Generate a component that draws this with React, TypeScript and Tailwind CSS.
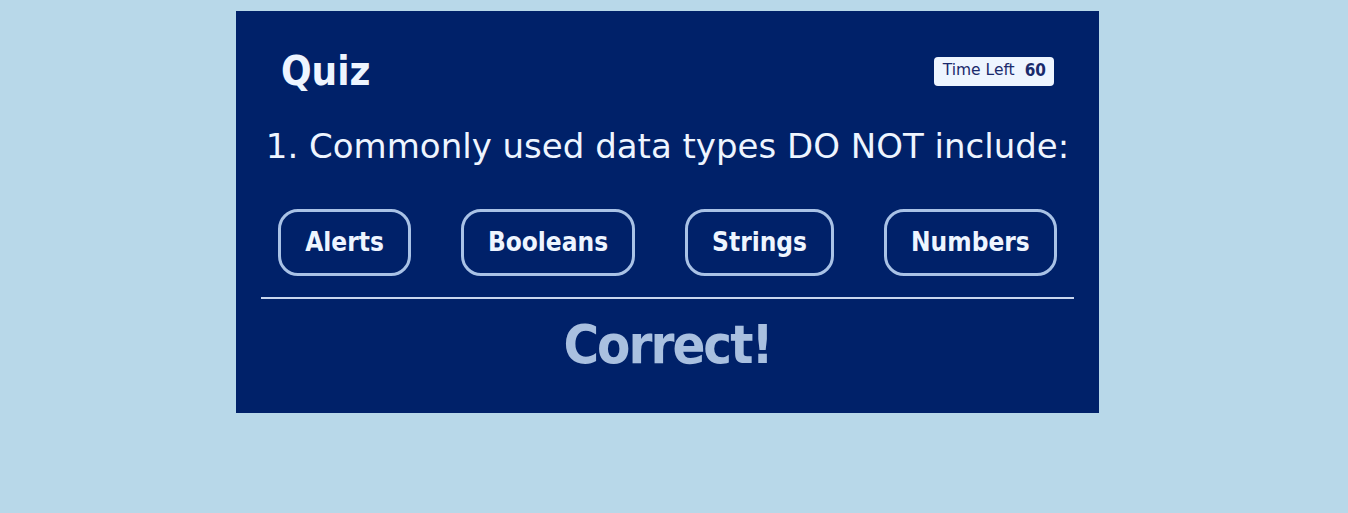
export default function App() {
  const answers = ["Alerts", "Booleans", "Strings", "Numbers"];
  const cond = { fontFamily: '"DejaVu Sans Condensed", "DejaVu Sans", Verdana, sans-serif' };
  return (
    <div className="min-h-[513px] w-full bg-[#b8d8e9] pt-[11px]" style={{ fontFamily: '"DejaVu Sans", Verdana, sans-serif' }}>
      <div className="ml-[236px] w-[863px] h-[402px] bg-[#002169] flex flex-col">
        <div className="flex items-center justify-between pl-[45px] pr-[45px] pt-[40px]">
          <h1 className="text-[40px] font-bold text-[#eef5ff] leading-none" style={cond}>Quiz</h1>
          <div className="bg-[#eef5ff] rounded-[4px] h-[29px] pl-[9px] pr-[8px] flex items-center gap-[10px] text-[#1a2a6c]">
            <span className="text-[15.5px]">Time Left</span>
            <span className="text-[17px] font-bold" style={cond}>60</span>
          </div>
        </div>
        <p className="text-center text-[34px] text-[#eef5ff] mt-[38px] leading-none">
          1. Commonly used data types DO NOT include:
        </p>
        <div className="flex justify-center gap-[50px] mt-[46px]">
          {answers.map((a) => (
            <button
              key={a}
              className="h-[67px] px-[24px] border-[3px] border-[#a9c2e6] rounded-[20px] text-[26px] font-bold text-[#eef5ff]"
              style={cond}
            >
              {a}
            </button>
          ))}
        </div>
        <div className="mx-[25px] mt-[21px] h-[2px] bg-[#c8d6ee]" />
        <div className="text-center text-[54px] font-bold text-[#a9c0e0] leading-none mt-[19px] tracking-[-2px]" style={cond}>Correct!</div>
      </div>
    </div>
  );
}
